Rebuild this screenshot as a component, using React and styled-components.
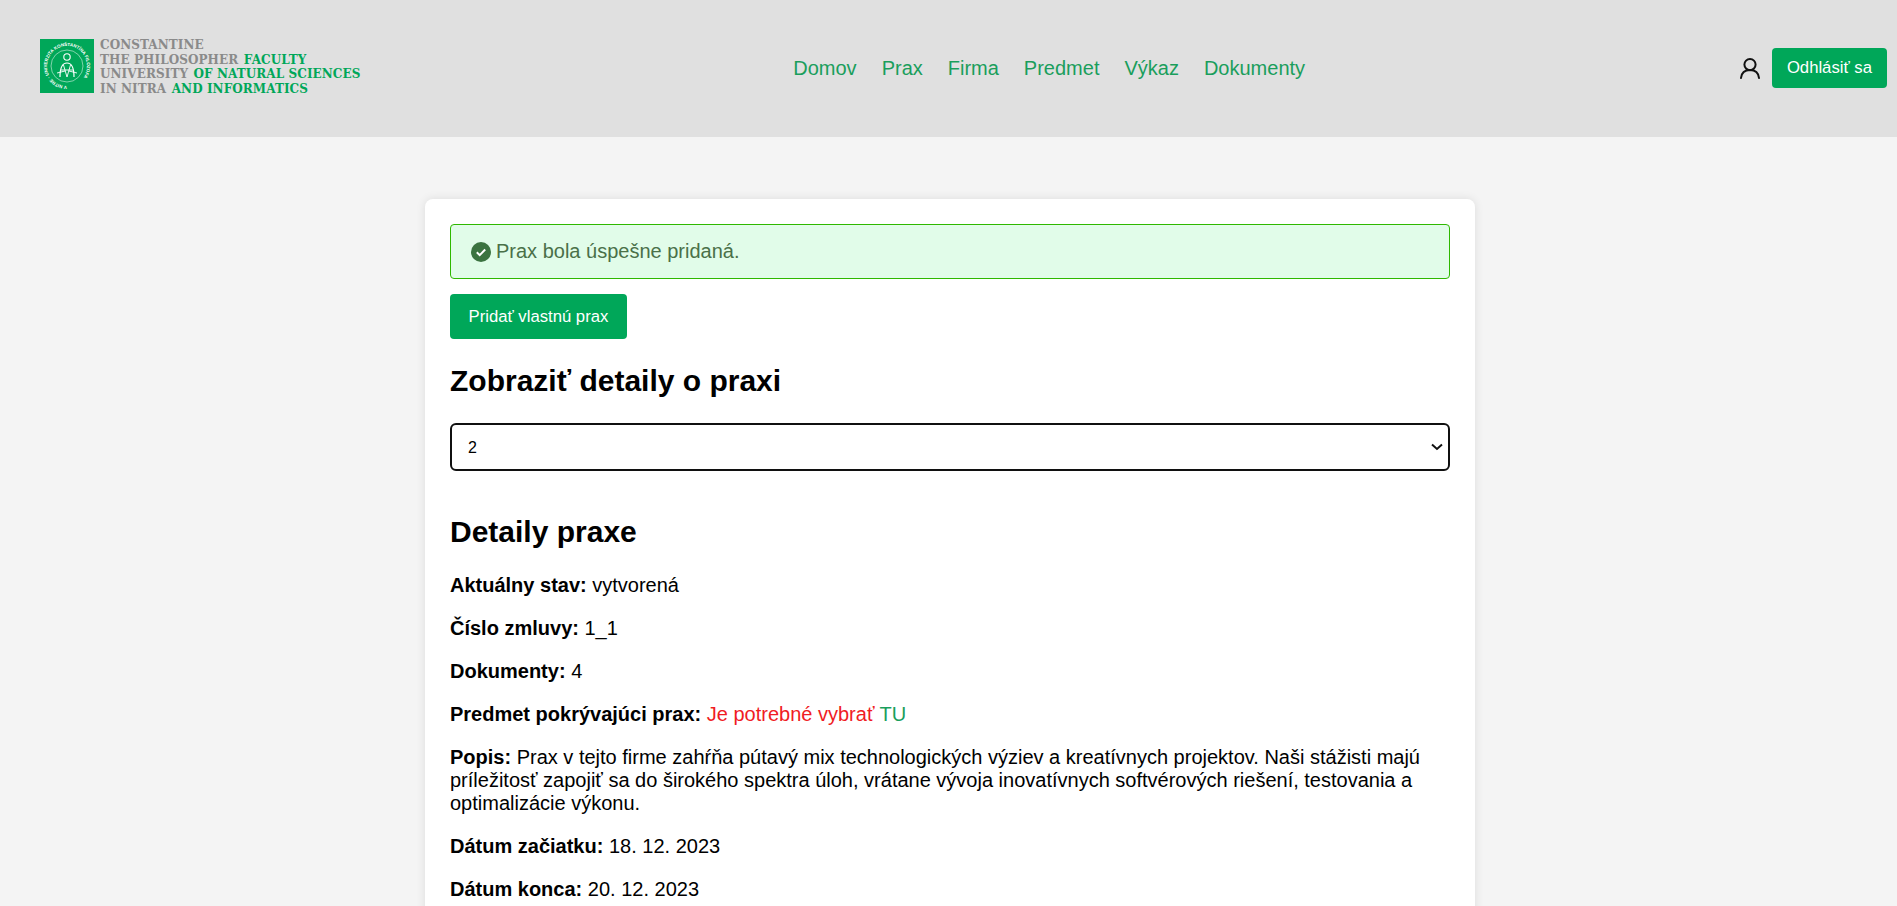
import React from 'react';
import styled, { createGlobalStyle } from 'styled-components';

const GlobalStyle = createGlobalStyle`
  html, body {
    margin: 0;
    padding: 0;
    height: 100%;
    overflow: hidden;
    background-color: #f4f4f4;
    font-family: "Liberation Sans", Arial, sans-serif;
    color: #000;
  }
`;

const Header = styled.header`
  height: 137px;
  background-color: #e0e0e0;
  display: flex;
  justify-content: space-between;
  align-items: center;
  padding: 0 10px 0 40px;
`;

const Logo = styled.div`
  display: flex;
  align-items: center;
  gap: 6px;
  margin-top: -5px;
`;

const LogoLines = styled.div`
  display: flex;
  flex-direction: column;
  padding-top: 2px;
  font-family: "DejaVu Serif", serif;
  font-weight: 700;
  font-size: 12px;
  line-height: 14.5px;
  letter-spacing: 0.08px;
  white-space: nowrap;
  color: #8a8a8a;
`;

const LogoAccent = styled.span`
  color: #00a759;
  margin-left: 5.5px;
`;

const Nav = styled.nav`
  display: flex;
  gap: 25px;
  font-size: 20px;
  color: #1a9e5c;
`;

const NavLink = styled.a`
  color: inherit;
  text-decoration: none;
`;

const UserBox = styled.div`
  display: flex;
  align-items: center;
  gap: 10px;
  margin-top: -1px;
`;

const Button = styled.button`
  background-color: #00a759;
  color: #fff;
  border: none;
  border-radius: 4px;
  font-family: inherit;
  font-size: 16.7px;
  height: ${(props) => props.$height || 40}px;
  padding: 0 ${(props) => props.$pad || 15}px;
`;

const Main = styled.main`
  display: flex;
  justify-content: center;
  padding-top: 62px;
`;

const Card = styled.section`
  width: 1000px;
  padding: 25px;
  background-color: #fff;
  border-radius: 8px;
  box-shadow: 0 0 10px rgba(0, 0, 0, 0.1);
  margin-left: 3px;
`;

const Alert = styled.div`
  display: flex;
  align-items: center;
  gap: 5px;
  height: 55px;
  box-sizing: border-box;
  padding: 0 20px;
  background-color: #e1fce9;
  border: 1px solid #2eb800;
  border-radius: 4px;
  color: #4a7048;
  font-size: 20px;
  margin-bottom: 15px;
`;

const Title = styled.h2`
  font-size: 30px;
  font-weight: 700;
  margin: ${(props) => props.$margin};
`;

const Select = styled.select`
  display: block;
  width: 100%;
  height: 48px;
  margin-top: 25px;
  box-sizing: border-box;
  appearance: none;
  background-color: #fff;
  background-image: url("data:image/svg+xml,%3Csvg xmlns='http://www.w3.org/2000/svg' width='12' height='8' viewBox='0 0 12 8'%3E%3Cpath d='M1 1.500l5 4.500 5-4.500' fill='none' stroke='%23111' stroke-width='2'/%3E%3C/svg%3E");
  background-repeat: no-repeat;
  background-position: right 5px center;
  border: 2px solid #101010;
  border-radius: 6px;
  padding: 0 16px;
  font-family: inherit;
  font-size: 16px;
  color: #000;
`;

const Row = styled.p`
  margin: 0 0 20px;
  font-size: 20px;
  line-height: 23px;
`;

const Missing = styled.span`
  color: #f01c24;
`;

const Link = styled.span`
  color: #1a9e5c;
`;

const Seal = () => (
  <svg width="54" height="54" viewBox="0 0 54 54">
    <rect width="54" height="54" fill="#00a759" />
    <defs>
      <path id="sealRing" d="M27 47A20 20 0 0 1 27 7A20 20 0 0 1 27 47" />
    </defs>
    <circle cx="27" cy="27" r="16" fill="none" stroke="#fff" strokeWidth="0.5" />
    <text fontFamily="Liberation Sans, sans-serif" fontSize="4.500" fontWeight="700" fill="#fff">
      <textPath href="#sealRing">V NITRE · UNIVERZITA KONŠTANTÍNA FILOZOFA</textPath>
    </text>
    <circle cx="27" cy="18" r="3.200" fill="none" stroke="#fff" strokeWidth="1.100" />
    <path d="M20 38c0-8 1.500-14 7-14s7 6 7 14" fill="none" stroke="#fff" strokeWidth="1.200" />
    <path d="M23.500 26l3.500 12M30.500 26L27 38M21 31h12M17 34l8-2M37 34l-8-2" stroke="#fff" strokeWidth="0.900" fill="none" />
  </svg>
);

const UserIcon = () => (
  <svg width="24" height="24" viewBox="0 0 24 24" fill="none" stroke="#111" strokeWidth="2" strokeLinecap="round">
    <circle cx="12" cy="8.600" r="5.600" />
    <path d="M3 22c.5-4.600 3.500-8 9-8s8.500 3.400 9 8" />
  </svg>
);

const CheckIcon = () => (
  <svg width="20" height="20" viewBox="0 0 20 20">
    <circle cx="10" cy="10" r="10" fill="#3b7340" />
    <path d="M5.800 10.300l2.900 2.800 5.500-5.600" fill="none" stroke="#fff" strokeWidth="2" />
  </svg>
);

const navItems = ['Domov', 'Prax', 'Firma', 'Predmet', 'Výkaz', 'Dokumenty'];

const App = () => (
  <>
    <GlobalStyle />
    <Header>
      <Logo>
        <Seal />
        <LogoLines>
          <span>CONSTANTINE</span>
          <span>THE PHILOSOPHER<LogoAccent>FACULTY</LogoAccent></span>
          <span>UNIVERSITY<LogoAccent>OF NATURAL SCIENCES</LogoAccent></span>
          <span>IN NITRA<LogoAccent>AND INFORMATICS</LogoAccent></span>
        </LogoLines>
      </Logo>
      <Nav>
        {navItems.map((item) => (
          <NavLink key={item}>{item}</NavLink>
        ))}
      </Nav>
      <UserBox>
        <UserIcon />
        <Button>Odhlásiť sa</Button>
      </UserBox>
    </Header>
    <Main>
      <Card>
        <Alert>
          <CheckIcon />
          Prax bola úspešne pridaná.
        </Alert>
        <Button $height={45} $pad={18.5}>Pridať vlastnú prax</Button>
        <Title $margin="25px 0 0">Zobraziť detaily o praxi</Title>
        <Select defaultValue="2">
          <option value="1">1</option>
          <option value="2">2</option>
        </Select>
        <Title $margin="44px 0 25px">Detaily praxe</Title>
        <Row><b>Aktuálny stav:</b> vytvorená</Row>
        <Row><b>Číslo zmluvy:</b> 1_1</Row>
        <Row><b>Dokumenty:</b> 4</Row>
        <Row><b>Predmet pokrývajúci prax:</b> <Missing>Je potrebné vybrať</Missing> <Link>TU</Link></Row>
        <Row>
          <b>Popis:</b> Prax v tejto firme zahŕňa pútavý mix technologických výziev a kreatívnych projektov. Naši stážisti majú príležitosť zapojiť sa do širokého spektra úloh, vrátane vývoja inovatívnych softvérových riešení, testovania a optimalizácie výkonu.
        </Row>
        <Row><b>Dátum začiatku:</b> 18. 12. 2023</Row>
        <Row><b>Dátum konca:</b> 20. 12. 2023</Row>
      </Card>
    </Main>
  </>
);

export default App;
